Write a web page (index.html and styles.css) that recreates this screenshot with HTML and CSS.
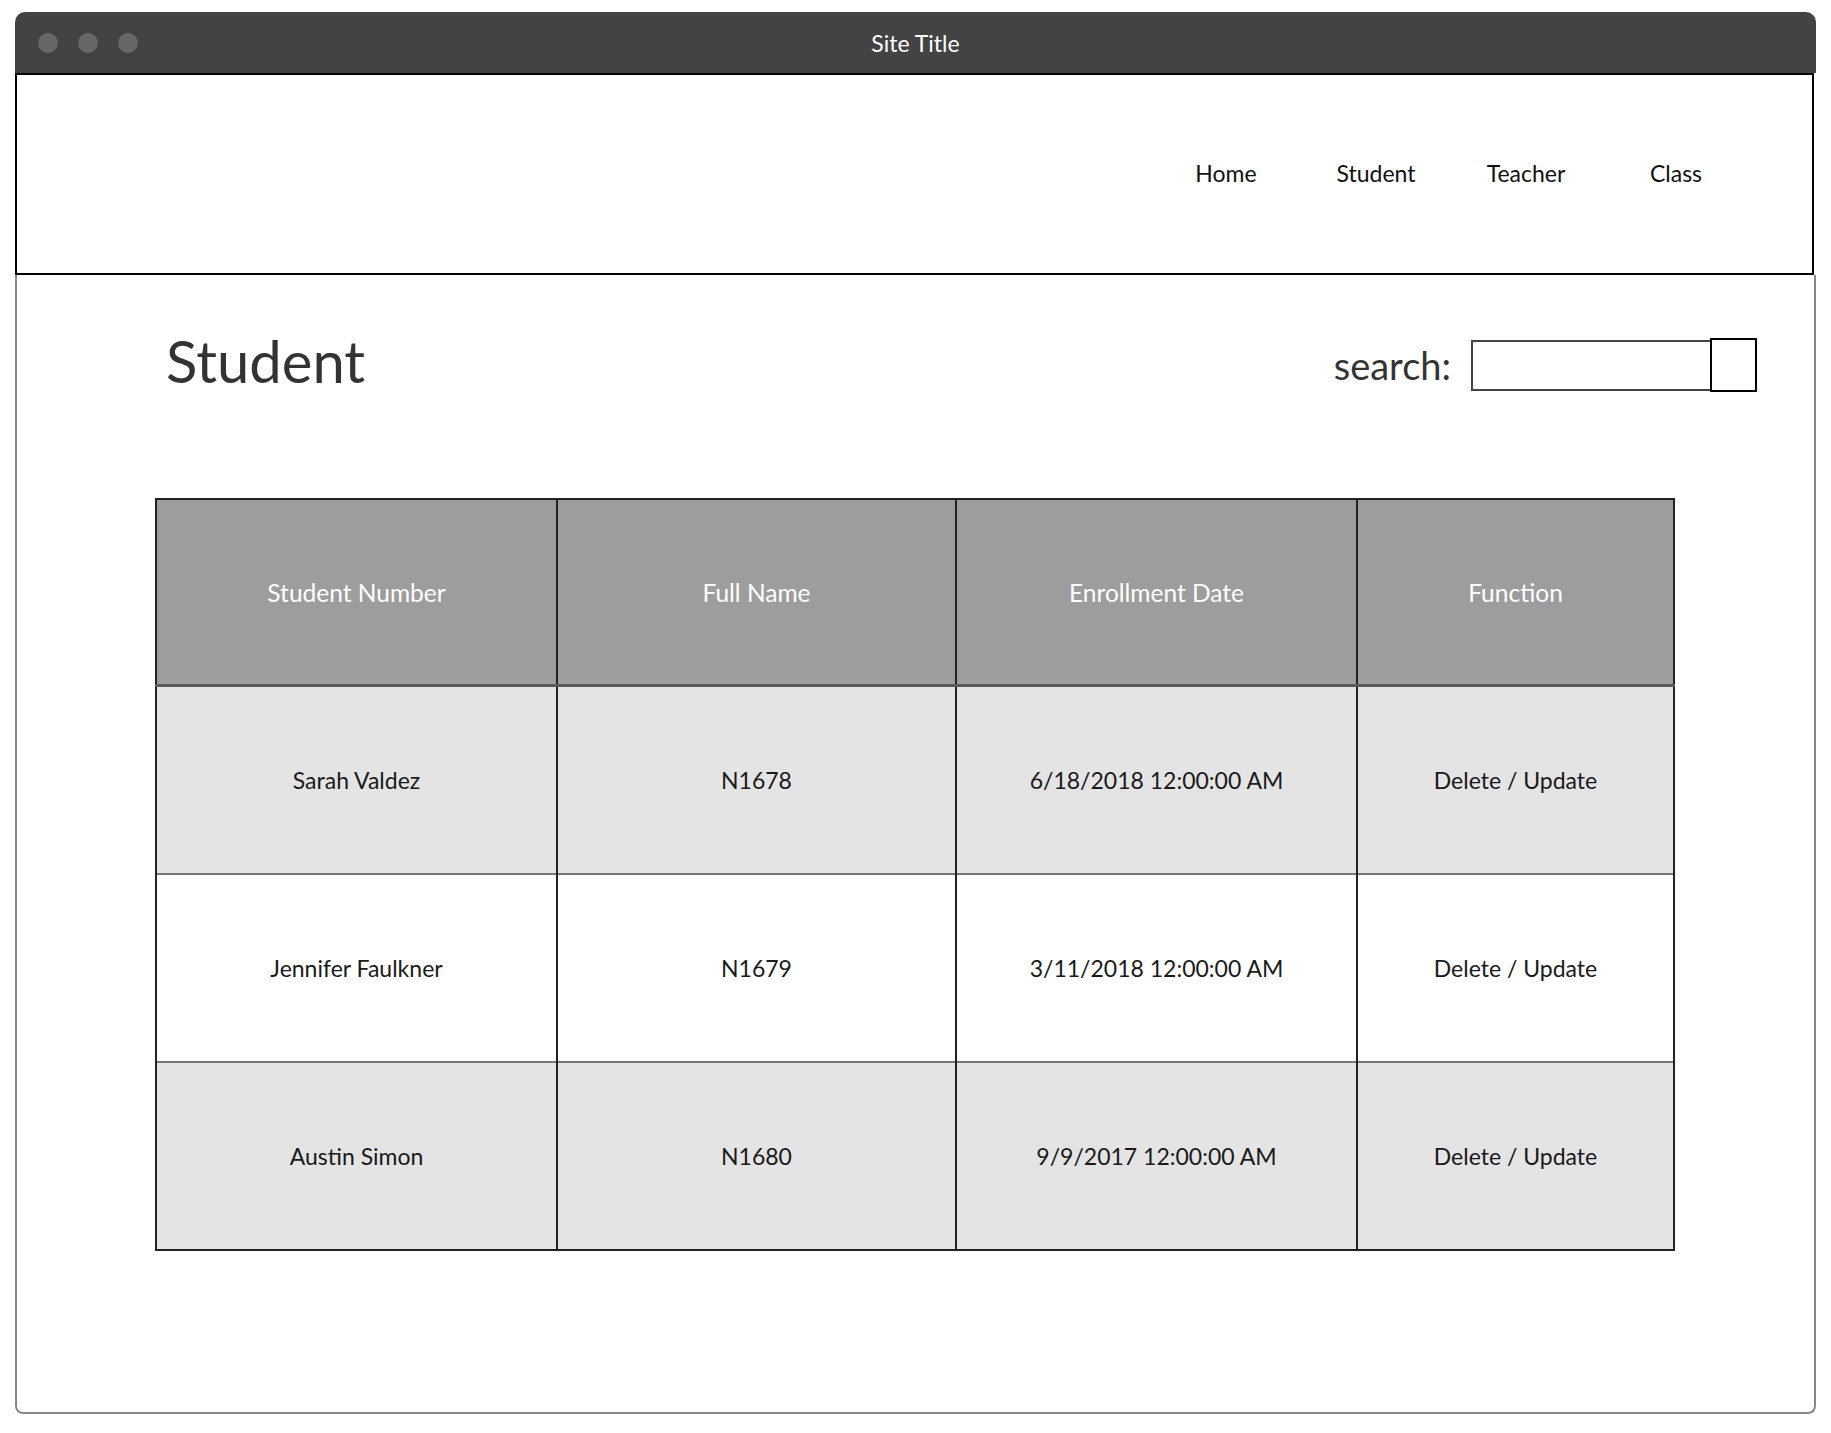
FILE: index.html
```html
<!DOCTYPE html>
<html lang="en">
<head>
<meta charset="utf-8">
<title>Student</title>
<link rel="stylesheet" href="styles.css">
</head>
<body>
<div class="window">
  <div class="titlebar">
    <div class="dots"><span class="dot"></span><span class="dot"></span><span class="dot"></span></div>
    <div class="site-title">Site Title</div>
  </div>
  <header class="header">
    <nav class="nav">
      <a class="nav-item">Home</a>
      <a class="nav-item">Student</a>
      <a class="nav-item">Teacher</a>
      <a class="nav-item">Class</a>
    </nav>
  </header>
  <main class="content">
    <div class="page-head">
      <h1 class="page-title">Student</h1>
      <div class="search">
        <span class="search-label">search:</span>
        <div class="search-input"></div>
        <div class="search-btn"></div>
      </div>
    </div>
    <table class="grid">
      <colgroup>
        <col class="c1"><col class="c2"><col class="c3"><col class="c4">
      </colgroup>
      <thead>
        <tr><th>Student Number</th><th>Full Name</th><th>Enrollment Date</th><th>Function</th></tr>
      </thead>
      <tbody>
        <tr class="alt"><td>Sarah Valdez</td><td>N1678</td><td>6/18/2018 12:00:00 AM</td><td>Delete / Update</td></tr>
        <tr><td>Jennifer Faulkner</td><td>N1679</td><td>3/11/2018 12:00:00 AM</td><td>Delete / Update</td></tr>
        <tr class="alt"><td>Austin Simon</td><td>N1680</td><td>9/9/2017 12:00:00 AM</td><td>Delete / Update</td></tr>
      </tbody>
    </table>
  </main>
</div>
</body>
</html>
```

FILE: styles.css
```css
html, body {
  margin: 0;
  padding: 0;
  background: #fff;
}
body {
  font-family: Lato, "Liberation Sans", sans-serif;
  color: #222;
}
.window {
  margin: 12px 0 0 15px;
  width: 1801px;
}
.titlebar {
  height: 61px;
  background: #434343;
  border-radius: 10px 10px 0 0;
  display: flex;
  align-items: center;
  position: relative;
}
.dots {
  display: flex;
  gap: 20px;
  padding-left: 23px;
}
.dot {
  width: 20px;
  height: 20px;
  border-radius: 50%;
  background: #666;
}
.site-title {
  position: absolute;
  left: 0;
  right: 0;
  text-align: center;
  color: #fff;
  font-size: 23px;
  top: 17px;
}
.header {
  width: 1795px;
  height: 198px;
  border: 2px solid #000;
  display: flex;
  align-items: center;
  justify-content: flex-end;
}
.nav {
  display: flex;
  margin-right: 61px;
  margin-top: -2px;
}
.nav-item {
  width: 150px;
  text-align: center;
  font-size: 23px;
  color: #111;
}
.content {
  height: 1137px;
  border: 2px solid #888;
  border-top: none;
  border-radius: 0 0 8px 8px;
  padding: 0;
}
.page-head {
  display: flex;
  align-items: center;
  justify-content: space-between;
  padding: 50px 57px 0 149px;
  height: 70px;
}
.page-title {
  margin: 0;
  font-weight: 400;
  font-size: 58px;
  color: #333;
}
.search {
  display: flex;
  align-items: center;
  margin-top: 10px;
}
.search-label {
  font-size: 38px;
  color: #333;
  margin-right: 20px;
}
.search-input {
  width: 237px;
  height: 47px;
  border: 2px solid #444;
}
.search-btn {
  width: 43px;
  height: 50px;
  border: 2px solid #000;
  margin-left: -2px;
}
.grid {
  margin: 103px 0 0 138px;
  border-collapse: collapse;
  width: 1519px;
  table-layout: fixed;
  border: 2px solid #222;
}
.c1 { width: 401px; }
.c2 { width: 399px; }
.c3 { width: 401px; }
.c4 { width: 317px; }
.grid th, .grid td {
  border-left: 2px solid #222;
  border-right: 2px solid #222;
  text-align: center;
  vertical-align: middle;
  padding: 0;
}
.grid th {
  height: 184px;
  background: #9d9d9d;
  color: #fff;
  font-weight: 400;
  font-size: 24.5px;
  border-bottom: 3px solid #5a5a5a;
}
.grid td {
  height: 186px;
  color: #1a1a1a;
  font-size: 23px;
  border-top: 2px solid #777;
}
.grid tr.alt td {
  background: #e4e4e4;
}
```
